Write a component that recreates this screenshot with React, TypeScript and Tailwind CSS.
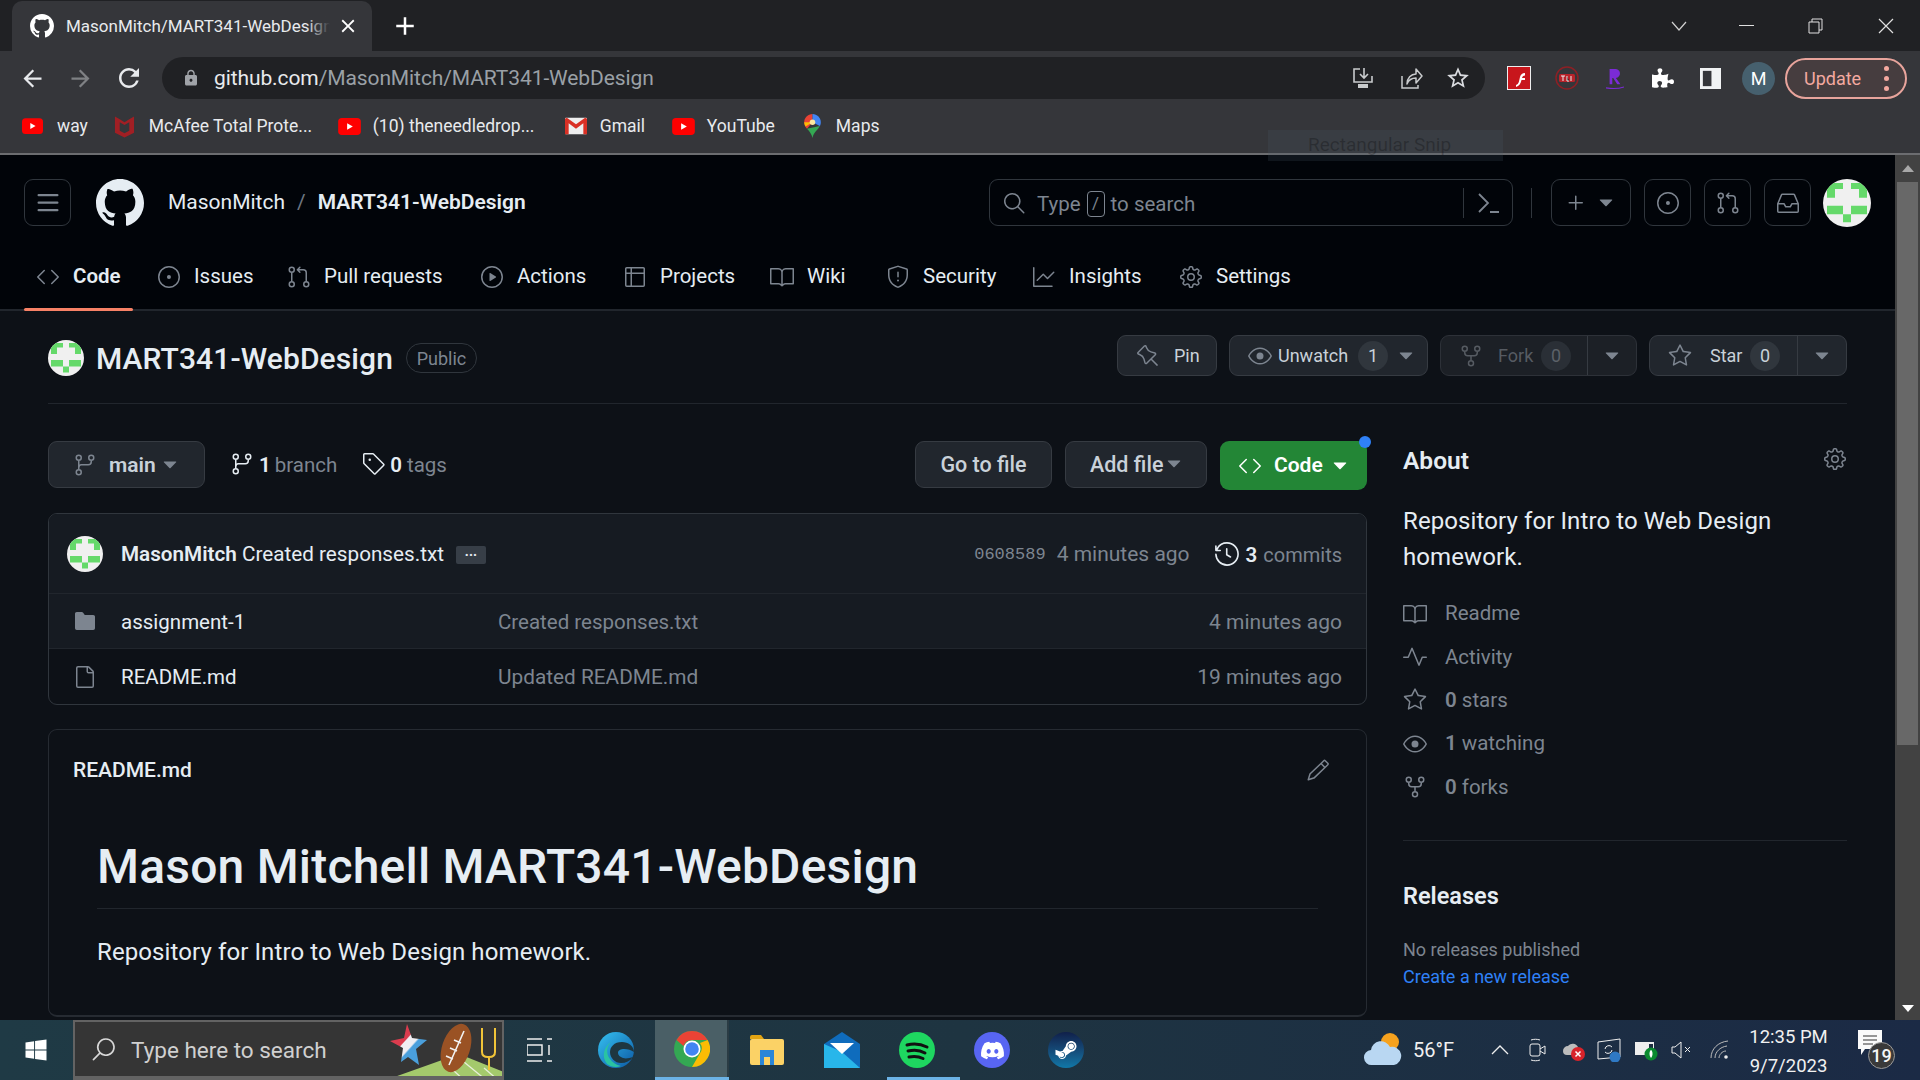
import React from "react";
import {
  GoCode, GoIssueOpened, GoGitPullRequest, GoPlay, GoTable, GoBook, GoShield, GoGraph, GoGear,
  GoPin, GoEye, GoRepoForked, GoStar, GoGitBranch, GoTag, GoHistory, GoFileDirectoryFill, GoFile, GoPencil,
  GoPulse, GoSearch, GoPlus, GoInbox, GoTriangleDown,
} from "react-icons/go";
import { FaDiscord, FaSteamSymbol, FaPuzzlePiece, FaWindows } from "react-icons/fa";
import { MdArrowBack, MdArrowForward, MdRefresh, MdLock, MdStarBorder, MdClose, MdAdd } from "react-icons/md";

function GoMarkGithub({ className }: { className: string }) {
  return (
    <svg viewBox="0 0 16 16" fill="currentColor" className={className}>
      <path d="M8 0c4.42 0 8 3.58 8 8a8.013 8.013 0 0 1-5.45 7.59c-.4.08-.55-.17-.55-.38 0-.27.01-1.13.01-2.2 0-.75-.25-1.23-.54-1.48 1.78-.2 3.65-.88 3.65-3.95 0-.88-.31-1.59-.82-2.15.08-.2.36-1.02-.08-2.12 0 0-.67-.22-2.2.82-.64-.18-1.32-.27-2-.27-.68 0-1.36.09-2 .27-1.53-1.03-2.2-.82-2.2-.82-.44 1.1-.16 1.92-.08 2.12-.51.56-.82 1.28-.82 2.15 0 3.06 1.86 3.75 3.64 3.95-.23.2-.44.55-.51 1.07-.46.21-1.61.55-2.33-.66-.15-.24-.6-.83-1.23-.82-.67.01-.27.38.01.53.34.19.73.9.82 1.13.16.45.68 1.31 2.69.94 0 .67.01 1.3.01 1.49 0 .21-.15.45-.55.38A7.995 7.995 0 0 1 0 8c0-4.42 3.58-8 8-8Z" />
    </svg>
  );
}

function GoThreeBars({ className }: { className: string }) {
  return (
    <svg viewBox="0 0 16 16" fill="currentColor" className={className}>
      <path d="M1 2.750A.75.75 0 0 1 1.750 2h12.500a.75.75 0 0 1 0 1.500H1.750A.75.75 0 0 1 1 2.750Zm0 5A.75.75 0 0 1 1.750 7h12.500a.75.75 0 0 1 0 1.500H1.750A.75.75 0 0 1 1 7.750ZM1.750 12h12.500a.75.75 0 0 1 0 1.500H1.750a.75.75 0 0 1 0-1.500Z" />
    </svg>
  );
}

function Identicon({ className }: { className: string }) {
  return (
    <svg viewBox="0 0 36 36" className={`rounded-full overflow-hidden ${className}`}>
      <rect width="36" height="36" fill="#f0f0f0" />
      <path d="M3 3h12v4.500H9V14H3zM21 3h12v11h-6V7.500h-6zM3 20h12v6.500H3zM21 20h12v6.500H21zM15 26.500h6v6h-6z" fill="#65d96a" />
    </svg>
  );
}

function Yt({ className }: { className: string }) {
  return (
    <svg viewBox="0 0 24 18" className={className}>
      <rect width="24" height="18" rx="4" fill="#f00" />
      <path d="M9.5 5.5v7l6-3.5z" fill="#fff" />
    </svg>
  );
}

function McAfee() {
  return (
    <svg viewBox="0 0 22 24" className="w-[21px] h-[24px] ml-[26px]">
      <path d="M1 2l5 3 5 3 5-3 5-3v17l-10 5-10-5z" fill="#a11f24" />
      <path d="M6 8l5 3 5-3v9l-5 2.5L6 17z" fill="#35363a" />
    </svg>
  );
}

function Gmail() {
  return (
    <svg viewBox="0 0 24 18" className="w-[22px] h-[18px] ml-[26px]">
      <rect width="24" height="18" rx="1" fill="#eee" />
      <path d="M0 1v17h4V6l8 6 8-6v12h4V1l-2-1-10 7L2 0z" fill="#d93025" />
    </svg>
  );
}

function MapsPin() {
  return (
    <svg viewBox="0 0 18 26" className="w-[17px] h-[24px] ml-[28px]">
      <path d="M9 0C4 0 0 4 0 9c0 3 1 5 3 7l6-7V0z" fill="#ea4335" />
      <path d="M9 0c5 0 9 4 9 9 0 1.500-.4 3-1 4L9 9z" fill="#4285f4" />
      <path d="M0 9c0 1.500.5 3 1.500 4.500L9 9z" fill="#fbbc04" />
      <path d="M3 16l14-3c-2 4-7 7-8 13-1-4-3-7-6-10z" fill="#34a853" />
      <circle cx="9" cy="9" r="3" fill="#fbe9a0" />
    </svg>
  );
}

function Bookmark({ icon, label, className }: { icon: React.ReactNode; label: string; className: string }) {
  return (
    <div className="flex items-center">
      {icon}
      <span className={`text-[17.500px] text-[#e8eaed] whitespace-nowrap ${className}`}>{label}</span>
    </div>
  );
}

function Divider() {
  return <div className="w-[1px] h-[30px] bg-[#30363d]" />;
}

function HeaderBtn({ children }: { children: React.ReactNode }) {
  return (
    <div className="w-[47px] h-[47px] border border-[#30363d] rounded-[9px] flex items-center justify-center text-[#7d8590]">
      {children}
    </div>
  );
}

const tabs = [
  { label: "Code", Icon: GoCode, w: "w-[133px]", active: true },
  { label: "Issues", Icon: GoIssueOpened, w: "w-[130px]" },
  { label: "Pull requests", Icon: GoGitPullRequest, w: "w-[193px]" },
  { label: "Actions", Icon: GoPlay, w: "w-[143px]" },
  { label: "Projects", Icon: GoTable, w: "w-[147px]" },
  { label: "Wiki", Icon: GoBook, w: "w-[116px]" },
  { label: "Security", Icon: GoShield, w: "w-[146px]" },
  { label: "Insights", Icon: GoGraph, w: "w-[147px]" },
  { label: "Settings", Icon: GoGear, w: "w-[130px]" },
];

function Count({ n, dim }: { n: string; dim?: boolean }) {
  return (
    <span className={`w-[30px] h-[30px] rounded-full flex items-center justify-center text-[18px] ${dim ? "text-[#5c6168] bg-[#2a2f36]" : "text-[#c9d1d9] bg-[#30363d]"}`}>
      {n}
    </span>
  );
}

const about = [
  { Icon: GoBook, body: <span>Readme</span> },
  { Icon: GoPulse, body: <span>Activity</span> },
  { Icon: GoStar, body: <span><b className="font-semibold">0</b> stars</span> },
  { Icon: GoEye, body: <span><b className="font-semibold">1</b> watching</span> },
  { Icon: GoRepoForked, body: <span><b className="font-semibold">0</b> forks</span> },
];

function Chrome() {
  return (
    <svg viewBox="0 0 36 36" className="w-[36px] h-[36px]">
      <circle cx="18" cy="18" r="18" fill="#34a853" />
      <path d="M18 0a18 18 0 0 1 15.600 9H18a9 9 0 0 0-8.500 6L2.500 9A18 18 0 0 1 18 0z" fill="#ea4335" />
      <path d="M33.600 9A18 18 0 0 1 18 36l7.800-13.500A9 9 0 0 0 26 12z" fill="#fbbc04" />
      <circle cx="18" cy="18" r="8.500" fill="#fff" />
      <circle cx="18" cy="18" r="6.800" fill="#4285f4" />
    </svg>
  );
}

function Edge() {
  return (
    <svg viewBox="0 0 36 36" className="w-[36px] h-[36px]">
      <defs>
        <linearGradient id="eg" x1="0" y1="0" x2="1" y2="1">
          <stop offset="0" stopColor="#35c1f1" />
          <stop offset="1" stopColor="#0c59a4" />
        </linearGradient>
      </defs>
      <circle cx="18" cy="18" r="18" fill="url(#eg)" />
      <path d="M36 20c0-6-6-10-12-10-8 0-12 5-12 10 0 6 5 11 11 11 5 0 9-2 12-6-3 1-7 2-10 1-3-1-5-3-5-5 0-3 3-4 6-4 4 0 7 1 10 3z" fill="#1e3640" />
      <path d="M9 32c-6-8-3-17 4-22-5 5-5 12-1 17 2 3 6 6 11 7-5 2-10 1-14-2z" fill="#2ac3a2" />
    </svg>
  );
}

function Explorer() {
  return (
    <svg viewBox="0 0 34 30" className="w-[34px] h-[30px]">
      <path d="M0 2a2 2 0 0 1 2-2h9l3 4H0z" fill="#e2a412" />
      <rect y="4" width="34" height="26" rx="2" fill="#fbd266" />
      <path d="M10 15h14v15H10z" fill="#2a86d8" />
      <path d="M14 22h6v8h-6z" fill="#fbd266" />
    </svg>
  );
}

function Mail() {
  return (
    <svg viewBox="0 0 36 36" className="w-[36px] h-[36px]">
      <path d="M18 0L36 12v24H0V12z" fill="#0f6cbd" />
      <path d="M0 12v24h36L18 20z" fill="#28b6ea" />
      <path d="M6 11h24L18 22z" fill="#fff" />
    </svg>
  );
}

function Spotify() {
  return (
    <svg viewBox="0 0 36 36" className="w-[36px] h-[36px]">
      <circle cx="18" cy="18" r="18" fill="#1ed760" />
      <path d="M8 13c7-2 14-1 20 2M9 19c6-1.500 12-1 17 2M10 25c5-1 10-.5 14 1.500" stroke="#111" strokeWidth="3" strokeLinecap="round" fill="none" />
    </svg>
  );
}

function Weather() {
  return (
    <svg viewBox="0 0 38 34" className="w-[38px] h-[34px]">
      <circle cx="26" cy="9" r="9" fill="#f6a21e" />
      <path d="M8 32a7.500 7.500 0 0 1-1-15 10 10 0 0 1 19-3 8 8 0 0 1 4 18z" fill="#b9d7f2" />
    </svg>
  );
}

function Tray() {
  return (
    <div className="flex items-center">
      <Weather />
      <span className="text-[20px] text-[#f1f1f1] ml-[11px] w-[78px]">56°F</span>
      <svg viewBox="0 0 18 10" className="w-[18px] h-[10px]"><path d="M1 9l8-8 8 8" stroke="#eee" strokeWidth="1.300" fill="none" /></svg>
      <svg viewBox="0 0 17 24" className="w-[17px] h-[24px] ml-[20px]">
        <rect x="1" y="6" width="10" height="12" rx="2" stroke="#eee" fill="none" />
        <path d="M11 11l5-3v8l-5-3M2 2c3-1 6-1 9 0M2 22c3 1 6 1 9 0" stroke="#eee" fill="none" />
      </svg>
      <svg viewBox="0 0 24 22" className="w-[24px] h-[22px] ml-[15px]">
        <path d="M2 12a5 5 0 0 1 5-5 6 6 0 0 1 10 1v8H6a4 4 0 0 1-4-4z" fill="#bcbcbc" />
        <circle cx="17" cy="15" r="7" fill="#d8232a" />
        <path d="M14.500 12.500l5 5m0-5l-5 5" stroke="#fff" strokeWidth="1.500" />
      </svg>
      <svg viewBox="0 0 24 24" className="w-[24px] h-[24px] ml-[12px]">
        <path d="M1 4l22-3v18L1 21z" stroke="#eee" fill="none" />
        <path d="M8 11a4 4 0 0 1 7-2M15 12a4 4 0 0 1-7 2" stroke="#eee" fill="none" />
        <circle cx="18" cy="19" r="5.500" fill="#2f79c4" />
      </svg>
      <svg viewBox="0 0 24 22" className="w-[24px] h-[22px] ml-[13px]">
        <rect x="1" y="3" width="19" height="13" fill="#eee" />
        <rect x="15" y="5" width="4" height="9" fill="#1d2c40" />
        <circle cx="17" cy="15" r="6.500" fill="#0a8a2f" />
        <path d="M17 11c2 1 2 6 0 8-2-2-2-7 0-8z" fill="#fff" />
      </svg>
      <svg viewBox="0 0 21 18" className="w-[21px] h-[18px] ml-[13px]">
        <path d="M1 6h3l6-5v16l-6-5H1z" stroke="#eee" fill="none" />
        <path d="M14 6l5 5m0-5l-5 5" stroke="#eee" />
      </svg>
      <svg viewBox="0 0 20 20" className="w-[20px] h-[20px] ml-[18px]">
        <path d="M1 18C1 9 8 2 18 1M5 18c0-6 5-11 12-12M9 18c0-3 3-7 7-7" stroke="#bbb" fill="none" />
        <circle cx="16" cy="17" r="1.800" fill="#eee" />
      </svg>
      <div className="w-[73px] ml-[22px] mt-[3px] flex flex-col items-center gap-[8px] text-[18.500px] leading-[21px] text-[#f1f1f1]">
        <span className="whitespace-nowrap">12:35 PM</span>
        <span className="whitespace-nowrap">9/7/2023</span>
      </div>
      <div className="relative w-[37px] h-[40px] ml-[33px]">
        <svg viewBox="0 0 24 26" className="w-[24px] h-[26px]">
          <path d="M0 0h24v19H7l-4 6v-6H0z" fill="#fafafa" />
          <path d="M5 6h14M5 10h14M5 14h10" stroke="#333" strokeWidth="1.200" />
        </svg>
        <span className="absolute left-[10px] top-[12px] w-[27px] h-[27px] rounded-full bg-[#3a3a3a] border border-[#9a9a9a] flex items-center justify-center text-[18px] font-medium text-[#f5f5f5]">19</span>
      </div>
    </div>
  );
}

export default function App() {
  return (
    <div className="relative w-[1920px] h-[1080px] overflow-hidden flex flex-col font-['Roboto',sans-serif] bg-[#0d1117] text-[#e6edf3]">
      {/* tab strip */}
      <div className="h-[51px] bg-[#202124] flex items-end pl-[12px] shrink-0">
        <div className="w-[360px] h-[50px] rounded-t-[10px] bg-[#35363a] flex items-center pl-[18px]">
          <GoMarkGithub className="w-[24px] h-[24px] text-white" />
          <div className="relative ml-[12px] w-[264px] h-[24px] leading-[24px] overflow-hidden whitespace-nowrap text-[17px] text-[#e8eaed]">
            MasonMitch/MART341-WebDesign
            <div className="absolute right-0 top-0 h-full w-[24px] bg-gradient-to-r from-transparent to-[#35363a]" />
          </div>
          <MdClose className="w-[22px] h-[22px] ml-[7px] text-white" />
        </div>
        <MdAdd className="w-[30px] h-[30px] ml-[18px] mb-[10px] text-white" />
        <div className="ml-auto flex items-center h-[51px] pr-[26px]">
          <svg viewBox="0 0 16 10" className="w-[16px] h-[10px]"><path d="M1 1l7 8 7-8" stroke="#d0d0d0" strokeWidth="1.200" fill="none" /></svg>
          <div className="w-[15px] h-[1px] bg-[#e0e0e0] ml-[52px]" />
          <svg viewBox="0 0 16 16" className="w-[16px] h-[16px] ml-[54px]">
            <path d="M4 4V1h10v11h-3M1 4h10v11H1z" stroke="#e0e0e0" fill="none" />
          </svg>
          <svg viewBox="0 0 16 16" className="w-[16px] h-[16px] ml-[54px]"><path d="M1 1l14 14m0-14L1 15" stroke="#e0e0e0" strokeWidth="1.200" /></svg>
        </div>
      </div>

      {/* toolbar */}
      <div className="h-[104px] bg-[#35363a] border-b-2 border-[#6c6d70] shrink-0">
        <div className="h-[54px] pt-[6px] flex items-start">
          <div className="h-[42px] flex items-center pl-[19px]">
            <MdArrowBack className="w-[27px] h-[27px] text-[#e8eaed]" />
            <MdArrowForward className="w-[27px] h-[27px] ml-[21px] text-[#7f8184]" />
            <MdRefresh className="w-[30px] h-[30px] ml-[20px] text-[#e8eaed]" />
          </div>
          <div className="ml-[18px] w-[1323px] h-[42px] rounded-full bg-[#202124] flex items-center pl-[20px] pr-[14px]">
            <MdLock className="w-[18px] h-[18px] text-[#a0a3a8]" />
            <span className="ml-[14px] mt-[2px] text-[21px] text-[#e8eaed] tracking-[-0.1px]">github.com<span className="text-[#9aa0a6]">/MasonMitch/MART341-WebDesign</span></span>
            <div className="ml-auto flex items-center gap-[25px]">
              <svg viewBox="0 0 22 22" className="w-[22px] h-[22px]">
                <path d="M8 2H2v13h18V9M12 1v9m-4-3l4 4 4-4" stroke="#c9cbcd" strokeWidth="1.600" fill="none" />
                <rect x="6" y="17" width="10" height="4" fill="#c9cbcd" />
              </svg>
              <svg viewBox="0 0 24 24" className="w-[24px] h-[24px]">
                <path d="M3 10v12h16v-3" stroke="#c9cbcd" strokeWidth="1.500" fill="none" />
                <path d="M8 18c0-6 4-10 9-10V3l6 7-6 7v-5c-4 0-7 1-9 6z" stroke="#c9cbcd" strokeWidth="1.500" strokeLinejoin="round" fill="none" />
              </svg>
              <MdStarBorder className="w-[26px] h-[26px] -ml-[3px] text-[#dadce0]" />
            </div>
          </div>
          <div className="h-[42px] flex items-center ml-[22px]">
            <svg viewBox="0 0 24 24" className="w-[24px] h-[24px]">
              <rect width="24" height="24" fill="#eee" />
              <rect x="1" y="1" width="22" height="22" fill="#c8161c" />
              <path d="M9 19c3-1 3-4 4-8 .5-2 2-4 5-4v2.500c-2 0-2.500 1-3 2.500h3v2h-3.500c-1 4-2.500 6-5.500 7z" fill="#fff" />
            </svg>
            <svg viewBox="0 0 24 24" className="w-[24px] h-[24px] ml-[24px]">
              <circle cx="12" cy="12" r="11" stroke="#8c2025" strokeWidth="1.500" fill="none" />
              <rect x="4" y="8" width="16" height="8" rx="1.500" fill="#b8232a" />
              <path d="M6 10h4M8 10v5M12 10v5h2M16 10v5" stroke="#eee" />
            </svg>
            <svg viewBox="0 0 20 26" className="w-[18px] h-[24px] ml-[27px]">
              <path d="M4 20V3h6a5 5 0 0 1 1 10l5 7h-3.500l-4.500-7H7v7z" fill="#7b2bd6" />
              <path d="M0 24c6 1 14 1 20-1" stroke="#7b2bd6" strokeWidth="1.200" fill="none" />
            </svg>
            <FaPuzzlePiece className="w-[22px] h-[22px] ml-[28px] text-white" />
            <svg viewBox="0 0 22 22" className="w-[21px] h-[21px] ml-[26px]">
              <rect width="22" height="22" fill="#f1f3f4" />
              <rect x="3" y="3" width="9" height="16" fill="#35363a" />
            </svg>
            <div className="w-[33px] h-[33px] rounded-full bg-[#46606e] ml-[21px] flex items-center justify-center text-[18px] text-white">M</div>
            <div className="w-[122px] h-[41px] ml-[10px] rounded-full border-2 border-[#e8a49c] bg-[#463d3f] flex items-center pl-[17px]">
              <span className="text-[18px] text-[#f4a9a0]">Update</span>
              <div className="ml-[23px] flex flex-col gap-[5px]">
                <div className="w-[5px] h-[5px] rounded-full bg-[#f4a9a0]" />
                <div className="w-[5px] h-[5px] rounded-full bg-[#f4a9a0]" />
                <div className="w-[5px] h-[5px] rounded-full bg-[#f4a9a0]" />
              </div>
            </div>
          </div>
        </div>
        <div className="h-[42px] flex items-center pl-[22px]">
          <Bookmark icon={<Yt className="w-[21px] h-[16px]" />} label="way" className="ml-[14px]" />
          <Bookmark icon={<McAfee />} label="McAfee Total Prote..." className="ml-[14px] w-[163px]" />
          <Bookmark icon={<Yt className="w-[23px] h-[17px] ml-[26px]" />} label="(10) theneedledrop..." className="ml-[12px] w-[166px]" />
          <Bookmark icon={<Gmail />} label="Gmail" className="ml-[13px] w-[46px]" />
          <Bookmark icon={<Yt className="w-[23px] h-[17px] ml-[26px]" />} label="YouTube" className="ml-[12px] w-[69px]" />
          <Bookmark icon={<MapsPin />} label="Maps" className="ml-[15px]" />
        </div>
      </div>

      {/* page */}
      <div className="h-[865px] flex shrink-0">
        <div className="w-[1895px] overflow-hidden">
          <header className="h-[156px] bg-[#010409] border-b-2 border-[#21262d]">
            <div className="h-[89px] pt-[24px] pl-[24px] flex items-start">
              <HeaderBtn><GoThreeBars className="w-[24px] h-[24px]" /></HeaderBtn>
              <GoMarkGithub className="w-[48px] h-[48px] ml-[25px] text-[#e6edf3]" />
              <div className="h-[48px] ml-[24px] flex items-center text-[21px] w-[821px]">
                <span className="text-[#e6edf3]">MasonMitch</span>
                <span className="text-[#6e7681] mx-[12px]">/</span>
                <span className="font-semibold text-[#e6edf3]">MART341-WebDesign</span>
              </div>
              <div className="w-[524px] h-[47px] border border-[#30363d] rounded-[9px] flex items-center pl-[12px] text-[#7d8590]">
                <GoSearch className="w-[24px] h-[24px]" />
                <span className="ml-[11px] mt-[3px] text-[20.500px]">Type</span>
                <span className="mx-[6px] mt-[2px] w-[18px] h-[26px] border border-[#7d8590] rounded-[4px] flex items-center justify-center text-[17px]">/</span>
                <span className="mt-[3px] text-[20.500px]">to search</span>
                <div className="ml-auto h-[30px] w-[1px] bg-[#30363d]" />
                <svg viewBox="0 0 24 24" className="w-[24px] h-[24px] mx-[12px]">
                  <path d="M3 3l9 9-9 9M14 21h9" stroke="#7d8590" strokeWidth="1.800" fill="none" />
                </svg>
              </div>
              <div className="ml-[18px] mt-[9px]"><Divider /></div>
              <div className="ml-[19px] w-[80px] h-[47px] border border-[#30363d] rounded-[9px] flex items-center justify-center gap-[6px] text-[#7d8590]">
                <GoPlus className="w-[24px] h-[24px]" />
                <GoTriangleDown className="w-[24px] h-[24px]" />
              </div>
              <div className="ml-[13px] flex gap-[13px]">
                <HeaderBtn><GoIssueOpened className="w-[24px] h-[24px]" /></HeaderBtn>
                <HeaderBtn><GoGitPullRequest className="w-[24px] h-[24px]" /></HeaderBtn>
                <HeaderBtn><GoInbox className="w-[24px] h-[24px]" /></HeaderBtn>
              </div>
              <Identicon className="w-[48px] h-[48px] ml-[12px]" />
            </div>
            <nav className="h-[65px] pl-[24px] flex items-stretch">
              {tabs.map(({ label, Icon, w, active }) => (
                <div key={label} className={`${w} flex items-center gap-[13px] relative ${active ? "pl-[12px]" : ""}`}>
                  <Icon className="w-[24px] h-[24px] text-[#7d8590] shrink-0" />
                  <span className={`text-[20.500px] whitespace-nowrap text-[#e6edf3] ${active ? "font-semibold" : ""}`}>{label}</span>
                  {active && <div className="absolute left-0 -bottom-[2px] w-[109px] h-[3px] rounded-full bg-[#f78166]" />}
                </div>
              ))}
            </nav>
          </header>

          <div className="px-[48px]">
            {/* repo head */}
            <div className="h-[93px] border-b border-[#21262d] flex items-start pt-[24px]">
              <Identicon className="w-[36px] h-[36px] mt-[5px]" />
              <span className="ml-[12px] mt-[4px] text-[30px] leading-[40px] font-medium tracking-[0.1px] text-[#e6edf3]">MART341-WebDesign</span>
              <span className="ml-[13px] mt-[8px] w-[71px] h-[30px] rounded-full border border-[#30363d] flex items-center justify-center text-[18px] text-[#7d8590]">Public</span>
              <div className="ml-auto flex gap-[12px]">
                <div className="w-[100px] h-[41px] bg-[#21262d] border border-[#363b42] rounded-[9px] flex items-center pl-[18px] gap-[14px] text-[18px] text-[#c9d1d9]">
                  <GoPin className="w-[24px] h-[24px] text-[#7d8590]" />
                  <span>Pin</span>
                </div>
                <div className="w-[199px] h-[41px] bg-[#21262d] border border-[#363b42] rounded-[9px] flex items-center pl-[18px] gap-[6px] text-[18px] text-[#c9d1d9]">
                  <GoEye className="w-[24px] h-[24px] text-[#7d8590]" />
                  <span className="w-[74px]">Unwatch</span>
                  <Count n="1" />
                  <GoTriangleDown className="w-[24px] h-[24px] text-[#7d8590]" />
                </div>
                <div className="w-[197px] h-[41px] bg-[#1c2026] border border-[#2d3138] rounded-[9px] flex items-center text-[18px] text-[#565b62]">
                  <div className="w-[147px] h-full border-r border-[#363b42] flex items-center pl-[18px]">
                    <GoRepoForked className="w-[24px] h-[24px]" />
                    <span className="ml-[15px] w-[43px]">Fork</span>
                    <Count n="0" dim />
                  </div>
                  <GoTriangleDown className="w-[24px] h-[24px] text-[#7d8590] ml-[12px]" />
                </div>
                <div className="w-[198px] h-[41px] bg-[#21262d] border border-[#363b42] rounded-[9px] flex items-center text-[18px] text-[#c9d1d9]">
                  <div className="w-[148px] h-full border-r border-[#363b42] flex items-center pl-[18px]">
                    <GoStar className="w-[24px] h-[24px] text-[#7d8590]" />
                    <span className="ml-[18px] w-[40px]">Star</span>
                    <Count n="0" />
                  </div>
                  <GoTriangleDown className="w-[24px] h-[24px] text-[#7d8590] ml-[12px]" />
                </div>
              </div>
            </div>

            <div className="flex pt-[37px] gap-[36px]">
              {/* main column */}
              <div className="w-[1319px]">
                <div className="h-[48px] flex items-start">
                  <div className="w-[157px] h-[47px] bg-[#21262d] border border-[#363b42] rounded-[9px] flex items-center pl-[24px]">
                    <GoGitBranch className="w-[24px] h-[24px] text-[#7d8590]" />
                    <span className="ml-[12px] mt-[2px] text-[21px] font-semibold text-[#c9d1d9]">main</span>
                    <GoTriangleDown className="w-[24px] h-[24px] ml-[2px] text-[#7d8590]" />
                  </div>
                  <div className="ml-[25px] h-[46px] flex items-center text-[20.500px] text-[#7d8590]">
                    <GoGitBranch className="w-[24px] h-[24px] text-[#e6edf3]" />
                    <b className="ml-[5px] mt-[3px] font-semibold text-[#e6edf3]">1</b>
                    <span className="ml-[4px] mt-[3px]">branch</span>
                    <GoTag className="w-[24px] h-[24px] ml-[25px] text-[#e6edf3]" />
                    <b className="ml-[4px] mt-[3px] font-semibold text-[#e6edf3]">0</b>
                    <span className="ml-[5px] mt-[3px]">tags</span>
                  </div>
                  <div className="ml-auto flex gap-[13px] items-start">
                    <div className="w-[137px] h-[47px] pt-[2px] bg-[#21262d] border border-[#363b42] rounded-[9px] flex items-center justify-center text-[21.500px] font-medium text-[#c9d1d9]">Go to file</div>
                    <div className="w-[142px] h-[47px] pt-[2px] bg-[#21262d] border border-[#363b42] rounded-[9px] flex items-center pl-[24px] text-[21.500px] font-medium text-[#c9d1d9]">
                      Add file
                      <GoTriangleDown className="w-[24px] h-[24px] text-[#7d8590] -ml-[1px] -mt-[4px]" />
                    </div>
                    <div className="relative w-[147px] h-[49px] bg-[#238636] rounded-[9px] flex items-center pl-[18px] text-[21px] font-semibold text-white">
                      <GoCode className="w-[24px] h-[24px]" />
                      <span className="ml-[12px]">Code</span>
                      <GoTriangleDown className="w-[24px] h-[24px] ml-[5px]" />
                      <span className="absolute -right-[4px] -top-[5px] w-[12px] h-[12px] rounded-full bg-[#2f81f7]" />
                    </div>
                  </div>
                </div>

                <div className="mt-[24px] rounded-[9px] border border-[#30363d] overflow-hidden">
                  <div className="h-[80px] bg-[#161b22] border-b border-[#21262d] flex items-center pl-[18px] pr-[24px]">
                    <Identicon className="w-[36px] h-[36px]" />
                    <span className="ml-[18px] mt-[3px] text-[20.700px] text-[#e6edf3] whitespace-nowrap"><span className="font-semibold">MasonMitch</span> Created responses.txt</span>
                    <span className="ml-[12px] w-[30px] h-[18px] mt-[2px] pb-[7px] rounded-[2px] bg-[#373e47] flex items-center justify-center text-[14px] font-bold leading-[10px] text-[#e6edf3]">...</span>
                    <span className="ml-auto mt-[3px] font-['Liberation_Mono',monospace] text-[17px] text-[#7d8590]">0608589</span>
                    <span className="ml-[11px] mt-[3px] text-[21px] text-[#7d8590]">4 minutes ago</span>
                    <GoHistory className="w-[26px] h-[26px] ml-[24px] text-[#e6edf3]" />
                    <b className="ml-[6px] mt-[3px] text-[20.500px] font-semibold">3</b>
                    <span className="ml-[6px] mt-[3px] text-[20px] text-[#7d8590]">commits</span>
                  </div>
                  <div className="h-[55px] bg-[#161b22] border-b border-[#21262d] flex items-center pl-[24px] pr-[24px] text-[20.500px]">
                    <GoFileDirectoryFill className="w-[24px] h-[24px] text-[#7d8590]" />
                    <span className="ml-[24px] mt-[3px] w-[377px] text-[#e6edf3]">assignment-1</span>
                    <span className="mt-[3px] text-[#7d8590]">Created responses.txt</span>
                    <span className="ml-auto mt-[3px] text-[21px] text-[#7d8590]">4 minutes ago</span>
                  </div>
                  <div className="h-[55px] flex items-center pl-[24px] pr-[24px] text-[20.500px]">
                    <GoFile className="w-[24px] h-[24px] text-[#7d8590]" />
                    <span className="ml-[24px] mt-[2px] w-[377px] text-[#e6edf3]">README.md</span>
                    <span className="mt-[2px] text-[20.800px] text-[#7d8590]">Updated README.md</span>
                    <span className="ml-auto mt-[2px] text-[21px] text-[#7d8590]">19 minutes ago</span>
                  </div>
                </div>

                <div className="mt-[24px] h-[288px] rounded-[9px] border-x border-t border-b-2 border-[#262b32]">
                  <div className="h-[80px] flex items-center justify-between pl-[24px] pr-[36px]">
                    <span className="mt-[2px] text-[21px] font-medium text-[#e6edf3]">README.md</span>
                    <GoPencil className="w-[24px] h-[24px] text-[#7d8590]" />
                  </div>
                  <div className="px-[48px] pt-[29px]">
                    <h1 className="h-[70px] text-[48px] leading-[56px] font-medium tracking-[0.2px] text-[#e6edf3] border-b border-[#21262d] whitespace-nowrap">Mason Mitchell MART341-WebDesign</h1>
                    <p className="mt-[27px] text-[24px] tracking-[0.1px] leading-[32px] text-[#e6edf3]">Repository for Intro to Web Design homework.</p>
                  </div>
                </div>
              </div>

              {/* sidebar */}
              <aside className="w-[444px]">
                <div className="flex items-center justify-between mt-[4px] h-[28px]">
                  <h2 className="mt-[4px] text-[24.500px] font-semibold text-[#e6edf3]">About</h2>
                  <GoGear className="w-[24px] h-[24px] text-[#7d8590]" />
                </div>
                <p className="mt-[30px] text-[24px] tracking-[0.1px] leading-[36px] text-[#e6edf3]">Repository for Intro to Web Design homework.</p>
                <div className="mt-[17px] flex flex-col">
                  {about.map(({ Icon, body }, i) => (
                    <div key={i} className="h-[43.400px] flex items-center text-[20.500px] text-[#7d8590]">
                      <Icon className="w-[24px] h-[24px] shrink-0" />
                      <span className="ml-[18px]">{body}</span>
                    </div>
                  ))}
                </div>
                <div className="mt-[31px] border-t border-[#21262d] pt-[39px]">
                  <h2 className="text-[23.500px] leading-[32px] font-semibold text-[#e6edf3]">Releases</h2>
                  <div className="mt-[24px] text-[18px] leading-[27px] text-[#7d8590]">No releases published</div>
                  <div className="text-[18px] leading-[27px] text-[#2f81f7]">Create a new release</div>
                </div>
              </aside>
            </div>
          </div>
        </div>
        {/* scrollbar */}
        <div className="w-[25px] bg-[#424242] flex flex-col items-center">
          <div className="h-[27px] flex items-center justify-center">
            <div className="w-0 h-0 border-x-[6px] border-x-transparent border-b-[7px] border-b-[#a8a8a8]" />
          </div>
          <div className="w-[21px] h-[563px] bg-[#686868]" />
          <div className="mt-auto h-[24px] flex items-center justify-center">
            <div className="w-0 h-0 border-x-[6px] border-x-transparent border-t-[7px] border-t-white" />
          </div>
        </div>
      </div>

      {/* taskbar */}
      <div className="h-[60px] flex items-center bg-gradient-to-r from-[#1f3a45] via-[#1e3441] to-[#1b2a45] shrink-0">
        <FaWindows className="w-[24px] h-[24px] ml-[24px] text-white" />
        <div className="relative ml-[25px] w-[431px] h-[60px] bg-[#353535] border-2 border-b-4 border-[#636363] flex items-center pl-[16px] overflow-hidden">
          <GoSearch className="w-[26px] h-[26px] -scale-x-100 text-[#d8d8d8]" />
          <span className="ml-[14px] mt-[3px] text-[22.500px] text-[#d0d0d0]">Type here to search</span>
          <svg viewBox="0 0 135 60" className="absolute -right-[2px] -top-[2px] w-[135px] h-[60px]">
            <defs>
              <linearGradient id="st" x1="0" y1="0" x2="1" y2="1">
                <stop offset="0.4" stopColor="#dc3c4e" />
                <stop offset="0.42" stopColor="#f0eef2" />
                <stop offset="0.55" stopColor="#f0eef2" />
                <stop offset="0.58" stopColor="#4a9fdc" />
              </linearGradient>
            </defs>
            <path d="M17 60L90 34l45 18v8z" fill="#a4c96c" />
            <path d="M75 42l20 18M95 42l22 18M115 48l14 12" stroke="#e8f0d8" strokeWidth="1.300" />
            <path d="M38 4l5 14 15 2-11 9 3 16-11-8-7 5 2-14-13-7 14-3z" fill="url(#st)" />
            <ellipse cx="87" cy="28" rx="14" ry="25" transform="rotate(18 87 28)" fill="#9a5224" />
            <path d="M80 45l15-34M77 36l7 3M81 28l7 3M85 20l7 3" stroke="#f2f2f2" strokeWidth="1.600" />
            <path d="M113 8v24c0 4 3 5 6 5h1v13M126 8v24c0 4-3 5-6 5" stroke="#f2c438" strokeWidth="2" fill="none" />
          </svg>
        </div>
        <svg viewBox="0 0 25 24" className="w-[25px] h-[24px] ml-[23px]">
          <path d="M0 1h15M0 23h15M0 7h15v10H0zM20 1h5M20 23h5M22 7v10" stroke="#eee" strokeWidth="1.500" fill="none" />
        </svg>
        <div className="ml-[46px]"><Edge /></div>
        <div className="relative ml-[21px] w-[74px] h-[60px] bg-[#4a5f66] border-b-[3px] border-[#6cb3e6] flex items-center justify-center">
          <Chrome />
          <div className="absolute right-0 top-0 h-full w-[2px] bg-[#2b3c44]" />
        </div>
        <div className="ml-[21px]"><Explorer /></div>
        <div className="ml-[40px]"><Mail /></div>
        <div className="relative ml-[27px] w-[73px] h-[60px] flex items-center pl-[12px] border-b-[3px] border-[#6cb3e6]">
          <div className="mt-[3px]"><Spotify /></div>
        </div>
        <div className="ml-[14px] w-[36px] h-[36px] rounded-full bg-[#5865f2] flex items-center justify-center">
          <FaDiscord className="w-[25px] h-[25px] text-white" />
        </div>
        <div className="ml-[38px] w-[36px] h-[36px] rounded-full bg-gradient-to-b from-[#10204a] to-[#1078a8] flex items-center justify-center">
          <FaSteamSymbol className="w-[24px] h-[24px] text-white" />
        </div>
        <div className="ml-auto pr-[25px]"><Tray /></div>
      </div>

      {/* fading snip toast that lies over the toolbar */}
      <div className="absolute left-[1268px] top-[130px] w-[235px] h-[31px] bg-[#4a5a6a]/20 flex items-center pl-[40px] text-[19px] text-[#000]/25">Rectangular Snip</div>
    </div>
  );
}
